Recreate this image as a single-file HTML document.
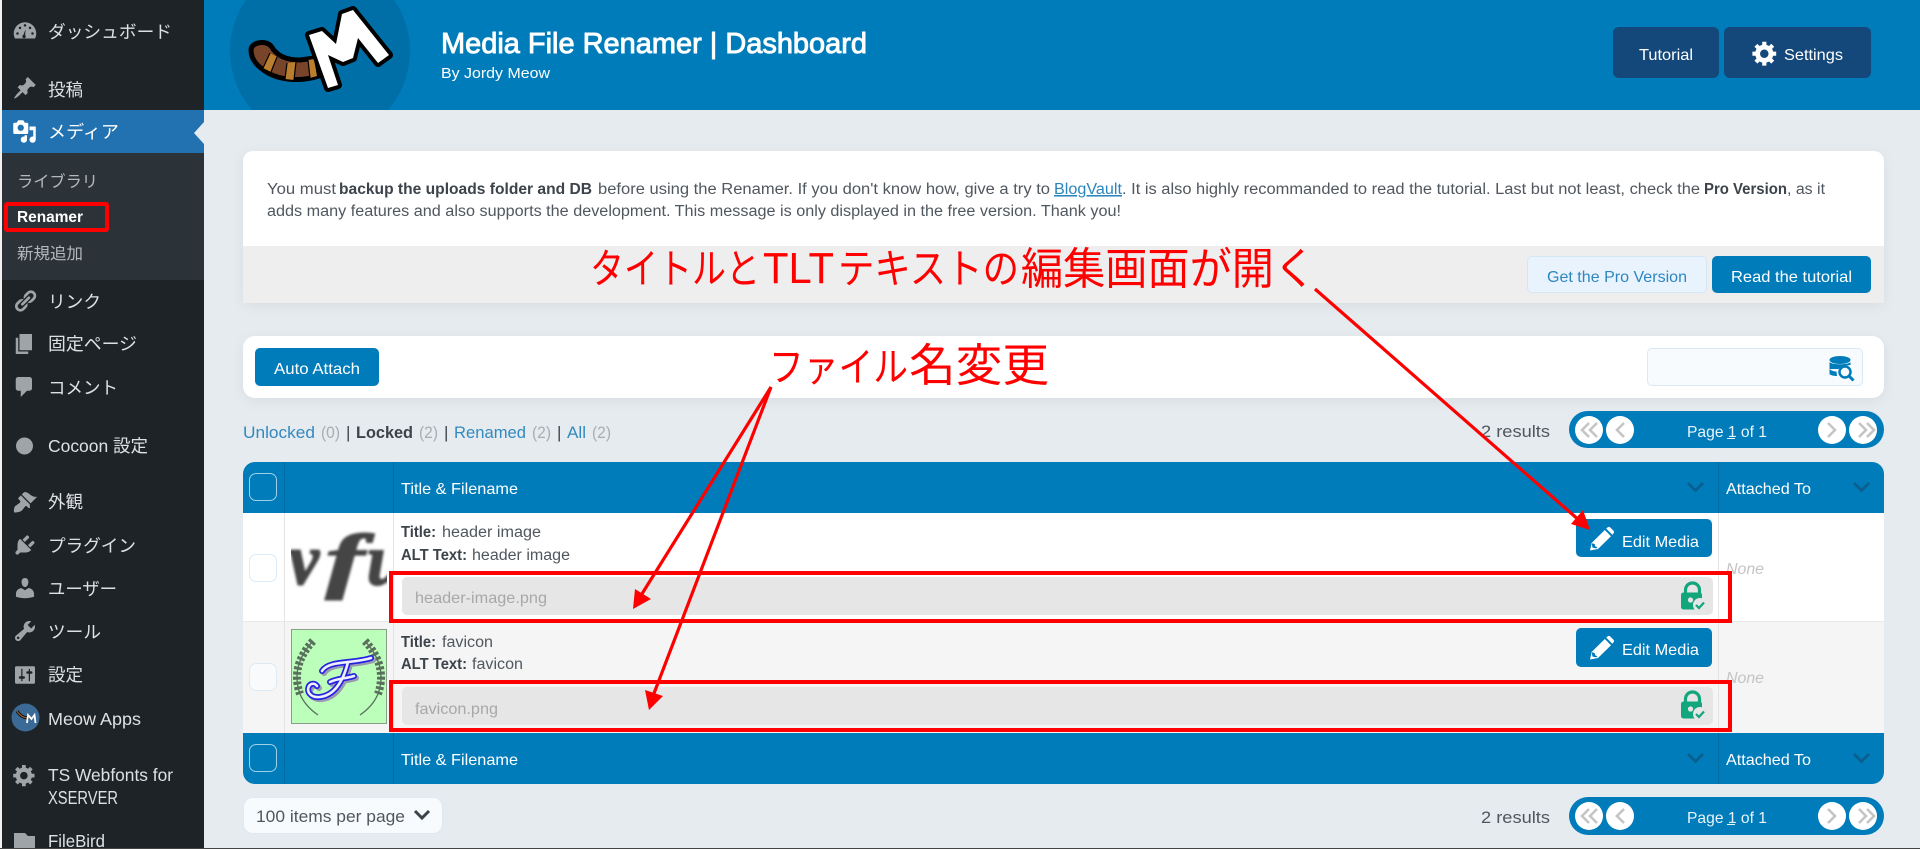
<!DOCTYPE html>
<html lang="ja">
<head>
<meta charset="utf-8">
<title>Media File Renamer | Dashboard</title>
<style>
html,body{margin:0;padding:0;width:1920px;height:849px;overflow:hidden;background:#e6ebef}
body{position:relative}
.b{position:absolute;box-sizing:border-box}
svg.o{position:absolute;left:0;top:0}
svg text{font-family:"Liberation Sans","Noto Sans CJK JP",sans-serif;font-size:15.5px;fill:#50575e}
.m text{font-size:17.5px;fill:#dfe0e1}
.i path,.i circle{fill:#9fa4a9}
.btn{background:#007cba;border-radius:5px}
.w{fill:#fff!important}
.k{font-weight:700;fill:#3c434a!important}
.l{fill:#3289bf!important}
.g{fill:#a9adb0!important}
.r{fill:#ff0000!important}
</style>
</head>
<body>
<!-- sidebar -->
<div class="b" style="left:0;top:0;width:2px;height:849px;background:#f1f1f1"></div>
<div class="b" style="left:2px;top:0;width:202px;height:849px;background:#1d2327"></div>
<div class="b" style="left:2px;top:110px;width:202px;height:43px;background:#2271b1"></div>
<div class="b" style="left:2px;top:153px;width:202px;height:127px;background:#2c3338"></div>
<!-- header -->
<div class="b" style="left:204px;top:0;width:1716px;height:110px;background:#007cba"></div>
<div class="b" style="left:1613px;top:27px;width:106px;height:51px;background:#14477a;border-radius:6px"></div>
<div class="b" style="left:1724px;top:27px;width:147px;height:51px;background:#14477a;border-radius:6px"></div>
<!-- notice card -->
<div class="b" style="left:243px;top:151px;width:1641px;height:152px;background:#fff;border-radius:10px 10px 0 0;box-shadow:0 3px 14px rgba(0,0,0,.06)"></div>
<div class="b" style="left:243px;top:246px;width:1641px;height:57px;background:#eeeeee"></div>
<div class="b" style="left:1527px;top:256px;width:180px;height:37px;background:#e9f3fd;border:1px solid #d5e6f5;border-radius:5px"></div>
<div class="b btn" style="left:1712px;top:256px;width:159px;height:37px"></div>
<!-- toolbar card -->
<div class="b" style="left:243px;top:336px;width:1641px;height:62px;background:#fff;border-radius:12px;box-shadow:0 3px 14px rgba(0,0,0,.06)"></div>
<div class="b btn" style="left:255px;top:348px;width:124px;height:38px"></div>
<div class="b" style="left:1647px;top:348px;width:216px;height:38px;background:#f8fbfe;border:1px solid #dbe9f5;border-radius:5px"></div>
<!-- pagers -->
<div class="b" style="left:1569px;top:411px;width:315px;height:37px;background:#007cba;border-radius:19px"></div>
<div class="b" style="left:1569px;top:797px;width:315px;height:38px;background:#007cba;border-radius:19px"></div>
<!-- table -->
<div class="b" style="left:243px;top:462px;width:1641px;height:51px;background:#007cba;border-radius:12px 12px 0 0"></div>
<div class="b" style="left:243px;top:513px;width:1641px;height:109px;background:#fff;border-bottom:1px solid #e9e9e9"></div>
<div class="b" style="left:243px;top:622px;width:1641px;height:111px;background:#f5f5f5"></div>
<div class="b" style="left:243px;top:733px;width:1641px;height:51px;background:#007cba;border-radius:0 0 12px 12px"></div>
<div class="b" style="left:284px;top:462px;width:1px;height:51px;background:#006ca3"></div>
<div class="b" style="left:393px;top:462px;width:1px;height:51px;background:#006ca3"></div>
<div class="b" style="left:1718px;top:462px;width:1px;height:51px;background:#006ca3"></div>
<div class="b" style="left:284px;top:733px;width:1px;height:51px;background:#006ca3"></div>
<div class="b" style="left:393px;top:733px;width:1px;height:51px;background:#006ca3"></div>
<div class="b" style="left:1718px;top:733px;width:1px;height:51px;background:#006ca3"></div>
<div class="b" style="left:284px;top:513px;width:1px;height:220px;background:#e4e4e4"></div>
<div class="b" style="left:393px;top:513px;width:1px;height:220px;background:#e4e4e4"></div>
<div class="b" style="left:1718px;top:513px;width:1px;height:220px;background:#e4e4e4"></div>
<div class="b" style="left:249px;top:473px;width:28px;height:28px;border:1px solid #9fd0e8;border-radius:7px"></div>
<div class="b" style="left:249px;top:744px;width:28px;height:28px;border:1px solid #9fd0e8;border-radius:7px"></div>
<div class="b" style="left:249px;top:554px;width:28px;height:28px;border:1px solid #dcebf6;border-radius:7px;background:#fff"></div>
<div class="b" style="left:249px;top:663px;width:28px;height:28px;border:1px solid #dcebf6;border-radius:7px;background:#f8fafb"></div>
<div class="b" style="left:402px;top:577px;width:1311px;height:38px;background:#e6e6e6;border-radius:5px"></div>
<div class="b" style="left:402px;top:687px;width:1311px;height:38px;background:#e6e6e6;border-radius:5px"></div>
<div class="b btn" style="left:1576px;top:519px;width:136px;height:38px"></div>
<div class="b btn" style="left:1576px;top:628px;width:136px;height:39px"></div>
<!-- per-page select -->
<div class="b" style="left:243px;top:797px;width:200px;height:37px;background:#f8fbfe;border:1px solid #dde9f3;border-radius:10px"></div>
<div class="b" style="left:0;top:848px;width:1920px;height:1px;background:#444"></div>

<svg class="o" width="1920" height="849" viewBox="0 0 1920 849" xmlns="http://www.w3.org/2000/svg">
<defs>
<clipPath id="hc"><rect x="204" y="0" width="300" height="110"/></clipPath>
<clipPath id="t1"><rect x="291" y="520" width="96" height="95"/></clipPath>
<filter id="bl" x="-10%" y="-10%" width="120%" height="120%"><feGaussianBlur stdDeviation="1.3"/></filter>
<g id="lock">
<path d="M4.5 10V7a7 7 0 0 1 14 0v3" fill="none" stroke="#13a57b" stroke-width="3.2"/>
<rect x="0" y="9.5" width="21" height="17" rx="2.5" fill="#13a57b"/>
<circle cx="9.5" cy="17" r="2.6" fill="#e6e6e6"/>
<circle cx="19" cy="22" r="7" fill="#e6e6e6"/>
<path d="M15 22l3 3 5-5.5" fill="none" stroke="#13a57b" stroke-width="2.2"/>
</g>
<g id="pencil" fill="#fff">
<path d="M0 23.5L1.6 16 14.8 3 21 9.2 8 22z"/>
<path d="M16.2 1.6l1.4-1.2c.9-.7 2-.6 2.8.2l3 3c.8.8.8 2 .1 2.8L22.400 7.800z"/>
<path d="M2.300 16.300l2.400.8.600 2.300 2.200.8-1.300 1.200-3.600-.8-.9-3.300z" fill="#007cba"/>
</g>
<g id="pg" fill="none" stroke="#c5c5c5" stroke-width="2.6">
<circle cx="1589" cy="0" r="14" fill="#fff" stroke="none"/>
<circle cx="1620" cy="0" r="14" fill="#fff" stroke="none"/>
<circle cx="1832" cy="0" r="14" fill="#fff" stroke="none"/>
<circle cx="1863" cy="0" r="14" fill="#fff" stroke="none"/>
<path d="M1589 -7l-7 7 7 7M1597 -7l-7 7 7 7M1624 -7l-7 7 7 7M1828 -7l7 7-7 7M1859 -7l7 7-7 7M1867 -7l7 7-7 7"/>
</g>
<g id="fg">
<path d="M322 671C329 660 352 664 371 658M348 662C344 678 336 695 320 697C311 698 306 692 309 686C311 683 315 683 317 686M330 682C338 678 345 679 354 676"/>
</g>
</defs>

<!-- logo -->
<g clip-path="url(#hc)">
<circle cx="320" cy="51" r="90" fill="#006fa8"/>
<path d="M251 50C251 42 266 40 271 46C277 56 286 60 300 60L315 58 319 76C300 82 280 80 268 73C258 67 251 60 251 50z" fill="#79452a" stroke="#000" stroke-width="5" stroke-linejoin="round"/>
<path d="M270 53L277 57 271 72 263 68zM287 63L296 62 294 80 285 79zM308 60L314 59 317 76 310 78z" fill="#b97f2f"/>
<path d="M270 53L263 68M277 57L271 72M287 63L285 79M296 62L294 80M308 60L310 78" stroke="#000" stroke-width="1.200"/>
<path d="M309 35L322 31 336 44 342 14 353 10 389 55 378 63 358 38 353 58 343 62 328 55 338 85 328 88z" fill="#fff" stroke="#000" stroke-width="8" stroke-linejoin="round" paint-order="stroke"/>
</g>
<text x="441" y="53" textLength="426" lengthAdjust="spacingAndGlyphs" class="w" style="font-size:29px;stroke:#fff;stroke-width:.9px">Media File Renamer | Dashboard</text>
<text x="441" y="78" textLength="109" lengthAdjust="spacingAndGlyphs" class="w" style="font-size:14.500px">By Jordy Meow</text>
<text x="1639" y="60" textLength="54" lengthAdjust="spacingAndGlyphs" class="w" style="font-size:16px">Tutorial</text>
<text x="1784" y="60" textLength="59" lengthAdjust="spacingAndGlyphs" class="w" style="font-size:16px">Settings</text>
<path transform="translate(1751 39) scale(1.400)" fill="#fff" d="M18 12h-2.180c-.17.7-.44 1.350-.81 1.930l1.540 1.540-2.100 2.100-1.540-1.540c-.58.36-1.230.63-1.910.79V19H8v-2.180c-.68-.16-1.330-.43-1.910-.79l-1.540 1.540-2.120-2.120 1.540-1.540c-.36-.58-.63-1.230-.79-1.910H1V9.030h2.170c.16-.7.44-1.350.8-1.940L2.430 5.550l2.100-2.100 1.540 1.540c.58-.37 1.240-.64 1.930-.81V2h3v2.180c.68.16 1.330.43 1.910.79l1.540-1.540 2.120 2.120-1.540 1.540c.36.59.64 1.240.8 1.940H18V12zm-8.500 1.500c1.660 0 3-1.340 3-3s-1.340-3-3-3-3 1.340-3 3 1.340 3 3 3z"/>

<!-- sidebar icons -->
<g class="i">
<g transform="translate(12.500 18.500) scale(1.250)"><path d="M10 3a9 9 0 0 0-9 9c0 1.500.4 2.900 1 4h16c.6-1.100 1-2.500 1-4a9 9 0 0 0-9-9z"/><path d="M10.500 8.500l-.4 4.800a1.400 1.400 0 1 1-1.400-.2z" style="fill:#1d2327"/><circle cx="4" cy="12" r="1" style="fill:#1d2327"/><circle cx="6" cy="7.500" r="1" style="fill:#1d2327"/><circle cx="10" cy="5.500" r="1" style="fill:#1d2327"/><circle cx="14" cy="7.500" r="1" style="fill:#1d2327"/><circle cx="16" cy="12" r="1" style="fill:#1d2327"/></g>
<path transform="translate(12.500 75.500) scale(1.250)" d="M10.440 3.020l1.820-1.820 6.360 6.350-1.830 1.820c-1.050-.68-2.480-.57-3.410.36l-.75.75c-.92.93-1.040 2.350-.35 3.410l-1.830 1.820-2.410-2.410-2.800 2.790c-.42.42-3.380 2.710-3.800 2.290s1.860-3.390 2.280-3.810l2.790-2.790L4.100 9.360l1.830-1.820c1.050.69 2.480.57 3.400-.36l.75-.75c.93-.92 1.050-2.350.36-3.410z"/>
<path transform="translate(12 119) scale(1.250)" style="fill:#fff" d="M13 11V4c0-.55-.45-1-1-1h-1.670L9 1H5L3.670 3H2c-.55 0-1 .45-1 1v7c0 .55.45 1 1 1h10c.55 0 1-.45 1-1zM7 4.500c1.380 0 2.500 1.120 2.500 2.500S8.380 9.500 7 9.500 4.500 8.380 4.500 7 5.620 4.500 7 4.500zM14 6h5v10.500c0 1.380-1.120 2.500-2.500 2.500S14 17.880 14 16.500s1.120-2.500 2.500-2.500c.17 0 .34.02.5.05V9h-3V6zm-4 8.050V13h2v3.500c0 1.380-1.120 2.500-2.500 2.500S7 17.880 7 16.500 8.120 14 9.500 14c.17 0 .34.02.5.05z"/>
<path transform="translate(12.500 288.500) scale(1.250)" d="M17.740 2.760c1.680 1.690 1.680 4.410 0 6.100l-1.530 1.520c-1.120 1.120-2.700 1.470-4.140 1.090l2.620-2.610.76-.77.76-.76c.84-.84.84-2.200 0-3.040-.84-.85-2.200-.85-3.040 0l-.77.76-3.380 3.380c-.37-1.440-.02-3.020 1.100-4.140l1.520-1.530c1.690-1.680 4.420-1.680 6.100 0zM8.590 13.430l5.340-5.340c.42-.42.42-1.100 0-1.520-.44-.43-1.130-.39-1.530 0l-5.330 5.340c-.42.42-.42 1.100 0 1.520.44.43 1.130.39 1.520 0zm-.76 2.290l4.140-4.150c.38 1.440.03 3.020-1.090 4.140l-1.520 1.530c-1.690 1.680-4.410 1.680-6.100 0-1.680-1.680-1.680-4.420 0-6.100l1.530-1.520c1.120-1.120 2.700-1.470 4.140-1.100l-4.140 4.150c-.85.84-.85 2.200 0 3.050.84.84 2.200.84 3.040 0z"/>
<path transform="translate(12 331.500) scale(1.250)" d="M6 15V2h10v13H6zm-1 1h8v2H3V5h2v11z"/>
<path transform="translate(12 374.500) scale(1.250)" d="M5 2h9c1.100 0 2 .9 2 2v7c0 1.100-.9 2-2 2h-2l-5 5v-5H5c-1.100 0-2-.9-2-2V4c0-1.100.9-2 2-2z"/>
<circle cx="24.500" cy="446" r="8.500"/>
<path transform="translate(12.500 489.500) scale(1.250)" d="M14.480 11.060L7.410 3.990l1.500-1.500c.5-.56 2.300-.47 3.510.32 1.210.8 1.430 1.280 2.910 2.100 1.180.64 2.450 1.260 4.450.85zm-.71.71L6.700 4.700 4.930 6.470c-.39.39-.39 1.020 0 1.410l1.060 1.060c.39.39.39 1.030 0 1.420-.6.6-1.430 1.110-2.210 1.690-.35.26-.7.53-1.010.84C1.430 13.230.91 15.950 1.200 18.300c2.350.29 5.070-.23 6.400-1.570.31-.31.58-.66.84-1.010.58-.78 1.090-1.610 1.690-2.210.39-.39 1.020-.39 1.410 0l1.060 1.060c.39.39 1.020.39 1.410 0z"/>
<path transform="translate(12.500 532.500) scale(1.250)" d="M13.110 4.360L9.870 7.600 8 5.730l3.240-3.240c.35-.34 1.050-.2 1.560.32.52.51.66 1.210.31 1.550zm-8 1.770l.91-1.120 9.010 9.010-1.190.84c-.71.71-2.630 1.160-3.820 1.160H6.140L4.900 17.260c-.59.59-1.540.59-2.120 0-.59-.58-.59-1.530 0-2.120l1.240-1.240v-3.880c0-1.130.4-3.190 1.090-3.890zm7.260 3.970l3.240-3.240c.34-.35 1.040-.21 1.550.31.52.51.66 1.210.31 1.550l-3.240 3.250z"/>
<path transform="translate(12.500 575.500) scale(1.250)" d="M10 9.250c-2.270 0-2.730-3.440-2.730-3.440C7 4.020 7.820 2 9.970 2c2.160 0 2.980 2.020 2.710 3.810 0 0-.41 3.440-2.680 3.440zm0 2.570L12.720 10c2.390 0 4.520 2.330 4.520 4.530v2.490s-3.650 1.130-7.240 1.130c-3.650 0-7.240-1.130-7.240-1.130v-2.490c0-2.250 1.940-4.480 4.470-4.480z"/>
<path transform="translate(12.500 618.500) scale(1.250)" d="M16.680 9.770c-1.340 1.340-3.300 1.670-4.950.99l-5.410 6.520c-.99.99-2.590.99-3.580 0s-.99-2.590 0-3.570l6.520-5.420c-.68-1.650-.35-3.610.99-4.950 1.280-1.280 3.120-1.620 4.720-1.060l-2.890 2.890 2.820 2.820 2.860-2.870c.53 1.580.18 3.390-1.080 4.650zM3.810 16.210c.4.39 1.040.39 1.430 0 .4-.4.4-1.040 0-1.430-.39-.4-1.030-.4-1.430 0-.39.39-.39 1.030 0 1.430z"/>
<path transform="translate(12.500 662.500) scale(1.250)" d="M18 16V4c0-.55-.45-1-1-1H3c-.55 0-1 .45-1 1v12c0 .55.45 1 1 1h14c.55 0 1-.45 1-1zM8 11h1c.55 0 1 .45 1 1s-.45 1-1 1H8v1.500c0 .28-.22.5-.5.5s-.5-.22-.5-.5V13H6c-.55 0-1-.45-1-1s.45-1 1-1h1V5.500c0-.28.22-.5.5-.5s.5.22.5.5V11zm5-2h-1c-.55 0-1-.45-1-1s.45-1 1-1h1V5.500c0-.28.22-.5.5-.5s.5.22.5.5V7h1c.55 0 1 .45 1 1s-.45 1-1 1h-1v5.500c0 .28-.22.5-.5.5s-.5-.22-.5-.5V9z"/>
<path transform="translate(12 762.500) scale(1.250)" d="M18 12h-2.180c-.17.7-.44 1.350-.81 1.930l1.540 1.540-2.100 2.100-1.540-1.540c-.58.36-1.230.63-1.910.79V19H8v-2.180c-.68-.16-1.330-.43-1.910-.79l-1.540 1.540-2.120-2.120 1.540-1.540c-.36-.58-.63-1.230-.79-1.910H1V9.030h2.170c.16-.7.44-1.350.8-1.940L2.430 5.550l2.100-2.100 1.540 1.540c.58-.37 1.240-.64 1.930-.81V2h3v2.180c.68.16 1.330.43 1.910.79l1.540-1.540 2.120 2.120-1.540 1.540c.36.59.64 1.240.8 1.940H18V12zm-8.500 1.500c1.660 0 3-1.340 3-3s-1.340-3-3-3-3 1.340-3 3 1.340 3 3 3z"/>
<path d="M14 833h11l3 3h7v12H14z"/>
</g>
<circle cx="25.500" cy="717.500" r="14" fill="#3b6a96"/>
<path d="M17 711c3 5 7 7 12 7" fill="none" stroke="#000" stroke-width="3"/>
<path d="M17 711c3 5 7 7 12 7" fill="none" stroke="#8a5a30" stroke-width="1.500"/>
<path d="M27 723l1-8 3.500 4 3-4 1 8" fill="none" stroke="#fff" stroke-width="1.800"/>
<path d="M204 122L194 133 204 144z" fill="#e6ebef"/>

<!-- sidebar text -->
<g class="m">
<text x="48" y="38" textLength="124" lengthAdjust="spacingAndGlyphs">ダッシュボード</text>
<text x="48" y="96" textLength="35" lengthAdjust="spacingAndGlyphs">投稿</text>
<text x="48" y="138" textLength="71" lengthAdjust="spacingAndGlyphs" style="fill:#fff">メディア</text>
<text x="17" y="187" textLength="81" lengthAdjust="spacingAndGlyphs" style="font-size:16px;fill:#b5b8bb">ライブラリ</text>
<text x="17" y="222" textLength="66" lengthAdjust="spacingAndGlyphs" style="font-size:15.500px;font-weight:700;fill:#fff">Renamer</text>
<text x="17" y="259" textLength="66" lengthAdjust="spacingAndGlyphs" style="font-size:16px;fill:#b5b8bb">新規追加</text>
<text x="48" y="308" textLength="53" lengthAdjust="spacingAndGlyphs">リンク</text>
<text x="48" y="350" textLength="89" lengthAdjust="spacingAndGlyphs">固定ページ</text>
<text x="48" y="394" textLength="70" lengthAdjust="spacingAndGlyphs">コメント</text>
<text x="48" y="452" textLength="100" lengthAdjust="spacingAndGlyphs">Cocoon 設定</text>
<text x="48" y="508" textLength="35" lengthAdjust="spacingAndGlyphs">外観</text>
<text x="48" y="552" textLength="88" lengthAdjust="spacingAndGlyphs">プラグイン</text>
<text x="48" y="595" textLength="69" lengthAdjust="spacingAndGlyphs">ユーザー</text>
<text x="48" y="638" textLength="53" lengthAdjust="spacingAndGlyphs">ツール</text>
<text x="48" y="681" textLength="35" lengthAdjust="spacingAndGlyphs">設定</text>
<text x="48" y="725" textLength="93" lengthAdjust="spacingAndGlyphs">Meow Apps</text>
<text x="48" y="781" textLength="125" lengthAdjust="spacingAndGlyphs">TS Webfonts for</text>
<text x="48" y="804" textLength="70" lengthAdjust="spacingAndGlyphs" style="font-size:18px">XSERVER</text>
<text x="48" y="847" textLength="57" lengthAdjust="spacingAndGlyphs">FileBird</text>
</g>

<!-- notice text -->
<text x="267" y="194" textLength="69" lengthAdjust="spacingAndGlyphs">You must</text>
<text x="339" y="194" textLength="253" lengthAdjust="spacingAndGlyphs" class="k">backup the uploads folder and DB</text>
<text x="598" y="194" textLength="452" lengthAdjust="spacingAndGlyphs">before using the Renamer. If you don't know how, give a try to</text>
<text x="1054" y="194" textLength="68" lengthAdjust="spacingAndGlyphs" style="fill:#2a85bd;text-decoration:underline">BlogVault</text>
<text x="1122" y="194" textLength="578" lengthAdjust="spacingAndGlyphs">. It is also highly recommanded to read the tutorial. Last but not least, check the</text>
<text x="1704" y="194" textLength="83" lengthAdjust="spacingAndGlyphs" class="k">Pro Version</text>
<text x="1787" y="194" textLength="38" lengthAdjust="spacingAndGlyphs">, as it</text>
<text x="267" y="216" textLength="854" lengthAdjust="spacingAndGlyphs">adds many features and also supports the development. This message is only displayed in the free version. Thank you!</text>

<text x="1547" y="282" textLength="140" lengthAdjust="spacingAndGlyphs" style="font-size:16px;fill:#2d86bf">Get the Pro Version</text>
<text x="1731" y="282" textLength="121" lengthAdjust="spacingAndGlyphs" class="w" style="font-size:16px">Read the tutorial</text>
<text x="274" y="374" textLength="86" lengthAdjust="spacingAndGlyphs" class="w" style="font-size:16px">Auto Attach</text>

<!-- search icon -->
<g fill="#007cba">
<ellipse cx="1840" cy="360" rx="10.500" ry="4"/>
<path d="M1829.500 362c2 3 19 3 21 0v3l-8 1-4 3h-9zM1829.500 369c2 2 5 2.500 7 2.500l.5 4.500c-3 0-6-.5-7.500-2z"/>
</g>
<circle cx="1845" cy="372" r="5.500" fill="#f8fbfe" stroke="#007cba" stroke-width="2.500"/>
<path d="M1849 376l4.500 4.500" stroke="#007cba" stroke-width="3"/>

<!-- filters -->
<g style="font-size:17px">
<text x="243" y="438" textLength="72" lengthAdjust="spacingAndGlyphs" class="l" style="font-size:17px">Unlocked</text>
<text x="321" y="438" textLength="19" lengthAdjust="spacingAndGlyphs" class="g" style="font-size:17px">(0)</text>
<text x="346" y="438" class="k" style="font-size:17px;font-weight:400">|</text>
<text x="356" y="438" textLength="57" lengthAdjust="spacingAndGlyphs" class="k" style="font-size:17px">Locked</text>
<text x="419" y="438" textLength="19" lengthAdjust="spacingAndGlyphs" class="g" style="font-size:17px">(2)</text>
<text x="444" y="438" class="k" style="font-size:17px;font-weight:400">|</text>
<text x="454" y="438" textLength="72" lengthAdjust="spacingAndGlyphs" class="l" style="font-size:17px">Renamed</text>
<text x="532" y="438" textLength="19" lengthAdjust="spacingAndGlyphs" class="g" style="font-size:17px">(2)</text>
<text x="557" y="438" class="k" style="font-size:17px;font-weight:400">|</text>
<text x="567" y="438" textLength="19" lengthAdjust="spacingAndGlyphs" class="l" style="font-size:17px">All</text>
<text x="592" y="438" textLength="19" lengthAdjust="spacingAndGlyphs" class="g" style="font-size:17px">(2)</text>
</g>
<text x="1481" y="437" textLength="69" lengthAdjust="spacingAndGlyphs" style="font-size:17px">2 results</text>
<text x="1481" y="823" textLength="69" lengthAdjust="spacingAndGlyphs" style="font-size:17px">2 results</text>

<!-- pagers -->
<use href="#pg" y="430"/>
<use href="#pg" y="816"/>
<text x="1687" y="437" textLength="80" lengthAdjust="spacingAndGlyphs" style="font-size:16px;fill:#e8f4fa">Page 1 of 1</text>
<rect x="1727" y="438" width="8" height="1" fill="#e8f4fa"/>
<text x="1687" y="823" textLength="80" lengthAdjust="spacingAndGlyphs" style="font-size:16px;fill:#e8f4fa">Page 1 of 1</text>
<rect x="1727" y="824" width="8" height="1" fill="#e8f4fa"/>

<!-- table heads -->
<text x="401" y="494" textLength="117" lengthAdjust="spacingAndGlyphs" class="w" style="font-size:16px">Title &amp; Filename</text>
<text x="1726" y="494" textLength="85" lengthAdjust="spacingAndGlyphs" class="w" style="font-size:16px">Attached To</text>
<text x="401" y="765" textLength="117" lengthAdjust="spacingAndGlyphs" class="w" style="font-size:16px">Title &amp; Filename</text>
<text x="1726" y="765" textLength="85" lengthAdjust="spacingAndGlyphs" class="w" style="font-size:16px">Attached To</text>
<path d="M1688 483l7.500 7.500 7.500-7.500M1854 483l7.500 7.500 7.500-7.500M1688 754l7.500 7.500 7.500-7.500M1854 754l7.500 7.500 7.500-7.500" fill="none" stroke="#0a5f8f" stroke-width="2.800"/>

<!-- thumbnails -->
<g clip-path="url(#t1)">
<g filter="url(#bl)">
<text x="289" y="584" textLength="30" lengthAdjust="spacingAndGlyphs" style="font-family:'Liberation Serif',serif;font-style:italic;font-weight:700;font-size:72px;fill:#444;stroke:#444;stroke-width:2px">v</text>
<text x="326" y="584" textLength="38" lengthAdjust="spacingAndGlyphs" style="font-family:'Liberation Serif',serif;font-style:italic;font-weight:700;font-size:72px;fill:#444;stroke:#444;stroke-width:2px">f</text>
<text x="367" y="584" textLength="38" lengthAdjust="spacingAndGlyphs" style="font-family:'Liberation Serif',serif;font-style:italic;font-weight:700;font-size:72px;fill:#444;stroke:#444;stroke-width:2px">u</text>
</g>
</g>
<rect x="291.500" y="629.500" width="95" height="94" fill="#bbffbb" stroke="#8a9f8a"/>
<g fill="none" stroke="#5a6f5c">
<path d="M313 641Q290 666 300 694M365 641Q388 666 378 694" stroke-width="8" stroke-dasharray="3 2"/>
<path d="M313 641Q290 666 300 694Q305 706 318 715M365 641Q388 666 378 694Q373 706 360 715" stroke-width="1.300"/>
</g>
<g fill="none" stroke-linecap="round">
<use href="#fg" x="2" y="2" stroke="#9a9ab0" stroke-width="6"/>
<use href="#fg" stroke="#2222e0" stroke-width="6"/>
<use href="#fg" stroke="#eef" stroke-width="2.600"/>
</g>

<!-- rows -->
<text x="401" y="537" textLength="35" lengthAdjust="spacingAndGlyphs" class="k">Title:</text>
<text x="442" y="537" textLength="99" lengthAdjust="spacingAndGlyphs">header image</text>
<text x="401" y="560" textLength="66" lengthAdjust="spacingAndGlyphs" class="k">ALT Text:</text>
<text x="472" y="560" textLength="98" lengthAdjust="spacingAndGlyphs">header image</text>
<text x="401" y="647" textLength="35" lengthAdjust="spacingAndGlyphs" class="k">Title:</text>
<text x="442" y="647" textLength="51" lengthAdjust="spacingAndGlyphs">favicon</text>
<text x="401" y="669" textLength="66" lengthAdjust="spacingAndGlyphs" class="k">ALT Text:</text>
<text x="472" y="669" textLength="51" lengthAdjust="spacingAndGlyphs">favicon</text>
<text x="415" y="603" textLength="132" lengthAdjust="spacingAndGlyphs" style="font-size:16px;fill:#a8a8a8">header-image.png</text>
<text x="415" y="714" textLength="83" lengthAdjust="spacingAndGlyphs" style="font-size:16px;fill:#a8a8a8">favicon.png</text>
<use href="#lock" x="1681" y="583"/>
<use href="#lock" x="1681" y="692"/>
<use href="#pencil" x="1590" y="527"/>
<use href="#pencil" x="1590" y="636"/>
<text x="1622" y="547" textLength="77" lengthAdjust="spacingAndGlyphs" class="w" style="font-size:16px">Edit Media</text>
<text x="1622" y="655" textLength="77" lengthAdjust="spacingAndGlyphs" class="w" style="font-size:16px">Edit Media</text>
<text x="1726" y="574" textLength="38" lengthAdjust="spacingAndGlyphs" style="font-size:15.500px;font-style:italic;fill:#c4c4c4">None</text>
<text x="1726" y="683" textLength="38" lengthAdjust="spacingAndGlyphs" style="font-size:15.500px;font-style:italic;fill:#c4c4c4">None</text>

<!-- select -->
<text x="256" y="822" textLength="149" lengthAdjust="spacingAndGlyphs" style="font-size:17px">100 items per page</text>
<path d="M415 811l7 7 7-7" fill="none" stroke="#3c434a" stroke-width="3"/>

<!-- annotations -->
<rect x="6" y="204" width="101" height="26" rx="1" fill="none" stroke="#ff0000" stroke-width="4"/>
<rect x="391" y="573" width="1339" height="48" fill="none" stroke="#ff0000" stroke-width="4"/>
<rect x="391" y="682" width="1339" height="48" fill="none" stroke="#ff0000" stroke-width="4"/>
<text x="590" y="283" textLength="170" lengthAdjust="spacingAndGlyphs" class="r" style="font-size:41px">タイトルと</text>
<text x="763" y="283" textLength="71" lengthAdjust="spacingAndGlyphs" class="r" style="font-size:44px">TLT</text>
<text x="838" y="283" textLength="181" lengthAdjust="spacingAndGlyphs" class="r" style="font-size:41px">テキストの</text>
<text x="1021" y="284" textLength="295" lengthAdjust="spacingAndGlyphs" class="r" style="font-size:44px">編集画面が開く</text>
<text x="769" y="381" textLength="139" lengthAdjust="spacingAndGlyphs" class="r" style="font-size:40px">ファイル</text>
<text x="909" y="381" textLength="140" lengthAdjust="spacingAndGlyphs" class="r" style="font-size:45px">名変更</text>
<g stroke="#ff0000" stroke-width="3.200" fill="#ff0000">
<path d="M1315 289L1580 521" fill="none"/>
<path d="M1590 530L1571 524 1583 510z" stroke="none"/>
<path d="M771 387L640 597" fill="none"/>
<path d="M633 609L635 589 651 599z" stroke="none"/>
<path d="M771 387L653 696" fill="none"/>
<path d="M649 710L645 690 663 696z" stroke="none"/>
</g>
</svg>
</body>
</html>
